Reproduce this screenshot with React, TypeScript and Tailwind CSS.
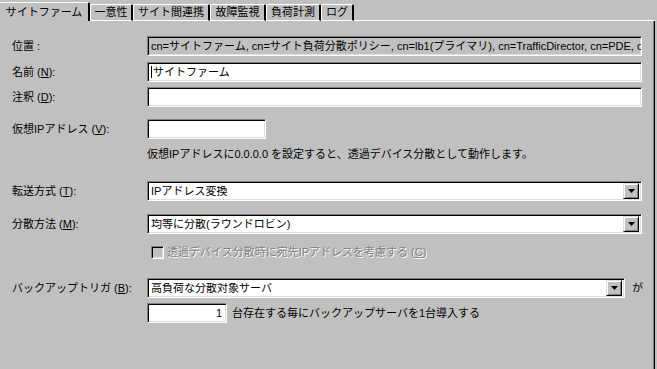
import React from "react";

const tabs = [
  { label: "サイトファーム", w: "w-[90px]" },
  { label: "一意性", w: "w-[43px]" },
  { label: "サイト間連携", w: "w-[77px]" },
  { label: "故障監視", w: "w-[56px]" },
  { label: "負荷計測", w: "w-[55px]" },
  { label: "ログ", w: "w-[33px]" },
];

const sunken =
  "border border-t-[#808080] border-l-[#808080] border-b-white border-r-white shadow-[inset_1px_1px_0_#000,inset_-1px_-1px_0_#dfdfdf]";

function Label({ text, m, children }: { text: string; m?: string; children?: React.ReactNode }) {
  return (
    <div className="w-[135px] shrink-0 whitespace-nowrap">
      {text}
      {m && (
        <>
          {" ("}
          <span className="underline underline-offset-1">{m}</span>
          {"):"}
        </>
      )}
      {children}
    </div>
  );
}

function DropButton() {
  return (
    <div className="w-[16px] h-[16px] shrink-0 flex items-center justify-center bg-[#c0c0c0] border border-t-[#dfdfdf] border-l-[#dfdfdf] border-b-black border-r-black shadow-[inset_1px_1px_0_#fff,inset_-1px_-1px_0_#808080]">
      <svg width="7" height="4" viewBox="0 0 7 4">
        <path d="M0 0h7L3.5 4z" fill="#000" />
      </svg>
    </div>
  );
}

function Combo({ value, w }: { value: string; w: string }) {
  return (
    <div className={`${w} h-[20px] bg-white flex items-center p-[2px] ${sunken}`}>
      <span className="flex-1 pl-[1px] whitespace-nowrap overflow-hidden">{value}</span>
      <DropButton />
    </div>
  );
}

export default function App() {
  return (
    <div className="w-[657px] h-[369px] bg-[#c0c0c0] text-black text-[11px] leading-none font-['Liberation_Sans','Noto_Sans_CJK_JP',sans-serif] flex flex-col overflow-hidden">
      {/* tab strip */}
      <div className="flex items-end h-[21px] w-[655px]">
        {tabs.map((t, i) =>
          i === 0 ? (
            <div
              key={t.label}
              className={`${t.w} h-[19px] flex items-center justify-center border-t border-t-white border-r-2 border-r-black rounded-tr-[2px]`}
            >
              {t.label}
            </div>
          ) : (
            <div
              key={t.label}
              className={`${t.w} h-[17px] flex items-center justify-center border-t border-l border-t-white border-l-white border-r-2 border-r-black border-b border-b-white rounded-t-[2px]`}
            >
              {t.label}
            </div>
          )
        )}
        <div className="flex-1 border-b border-b-white" />
      </div>

      {/* panel */}
      <div className="w-[655px] flex-1 border-r border-r-black shadow-[inset_-1px_0_0_#808080] pl-3 pt-[15px] flex flex-col">
        <div className="flex items-center h-[20px]">
          <Label text="位置 :" />
          <div className={`w-[495px] h-[20px] flex items-center px-[3px] overflow-hidden whitespace-nowrap ${sunken}`}>
            cn=サイトファーム, cn=サイト負荷分散ポリシー, cn=lb1(プライマリ), cn=TrafficDirector, cn=PDE, c
          </div>
        </div>

        <div className="flex items-center h-[20px] mt-[6px]">
          <Label text="名前" m="N" />
          <div className={`w-[495px] h-[20px] bg-white flex items-center px-[3px] ${sunken}`}>
            <span className="w-px h-[12px] bg-black mr-[1px]" />
            サイトファーム
          </div>
        </div>

        <div className="flex items-center h-[20px] mt-[5px]">
          <Label text="注釈" m="D" />
          <div className={`w-[495px] h-[20px] bg-white ${sunken}`} />
        </div>

        <div className="flex items-center h-[20px] mt-[12px]">
          <Label text="仮想IPアドレス" m="V" />
          <div className={`w-[119px] h-[20px] bg-white ${sunken}`} />
        </div>

        <div className="flex items-center h-[16px] mt-[7px] pl-[135px] whitespace-nowrap">
          仮想IPアドレスに0.0.0.0 を設定すると、透過デバイス分散として動作します。
        </div>

        <div className="flex items-center h-[20px] mt-[19px]">
          <Label text="転送方式" m="T" />
          <Combo value="IPアドレス変換" w="w-[495px]" />
        </div>

        <div className="flex items-center h-[20px] mt-[13px]">
          <Label text="分散方法" m="M" />
          <Combo value="均等に分散(ラウンドロビン)" w="w-[495px]" />
        </div>

        <div className="flex items-center h-[13px] mt-[12px] pl-[139px] text-[#808080] [text-shadow:1px_1px_0_#fff]">
          <div className={`w-[13px] h-[13px] bg-[#c0c0c0] shrink-0 ${sunken}`} />
          <span className="ml-[3px] whitespace-nowrap">
            透過デバイス分散時に宛先IPアドレスを考慮する (<span className="underline underline-offset-1">C</span>)
          </span>
        </div>

        <div className="flex items-center h-[20px] mt-[19px]">
          <Label text="バックアップトリガ" m="B" />
          <Combo value="高負荷な分散対象サーバ" w="w-[478px]" />
          <span className="ml-[7px]">が</span>
        </div>

        <div className="flex items-center h-[20px] mt-[5px] pl-[135px]">
          <div className={`w-[80px] h-[20px] bg-white flex items-center justify-end px-[4px] ${sunken}`}>1</div>
          <span className="ml-[5px] whitespace-nowrap">台存在する毎にバックアップサーバを1台導入する</span>
        </div>
      </div>
    </div>
  );
}
